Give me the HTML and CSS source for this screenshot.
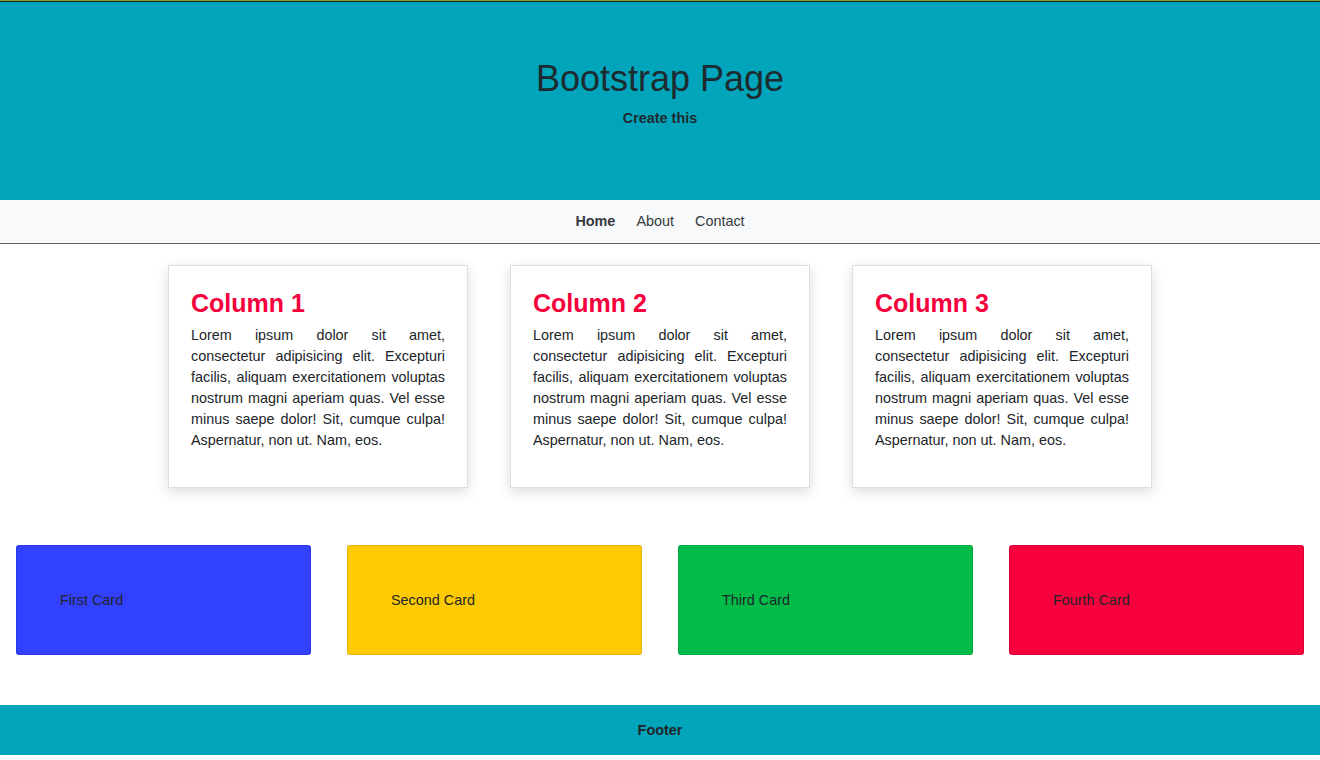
FILE: index.html
```html
<!DOCTYPE html>
<html lang="en">
<head>
<meta charset="utf-8">
<title>Bootstrap Page</title>
<link rel="stylesheet" href="styles.css">
</head>
<body>
<div class="page">
  <header class="hero">
    <h1 class="hero-title">Bootstrap Page</h1>
    <p class="hero-sub">Create this</p>
  </header>
  <nav class="nav">
    <a class="nav-link active" href="#">Home</a>
    <a class="nav-link" href="#">About</a>
    <a class="nav-link" href="#">Contact</a>
  </nav>
  <section class="columns">
    <div class="col-card">
      <h2 class="col-title">Column 1</h2>
      <p class="col-text">Lorem ipsum dolor sit amet, consectetur adipisicing elit. Excepturi facilis, aliquam exercitationem voluptas nostrum magni aperiam quas. Vel esse minus saepe dolor! Sit, cumque culpa! Aspernatur, non ut. Nam, eos.</p>
    </div>
    <div class="col-card">
      <h2 class="col-title">Column 2</h2>
      <p class="col-text">Lorem ipsum dolor sit amet, consectetur adipisicing elit. Excepturi facilis, aliquam exercitationem voluptas nostrum magni aperiam quas. Vel esse minus saepe dolor! Sit, cumque culpa! Aspernatur, non ut. Nam, eos.</p>
    </div>
    <div class="col-card">
      <h2 class="col-title">Column 3</h2>
      <p class="col-text">Lorem ipsum dolor sit amet, consectetur adipisicing elit. Excepturi facilis, aliquam exercitationem voluptas nostrum magni aperiam quas. Vel esse minus saepe dolor! Sit, cumque culpa! Aspernatur, non ut. Nam, eos.</p>
    </div>
  </section>
  <section class="tiles">
    <div class="tile tile-blue">First Card</div>
    <div class="tile tile-yellow">Second Card</div>
    <div class="tile tile-green">Third Card</div>
    <div class="tile tile-red">Fourth Card</div>
  </section>
  <footer class="footer">Footer</footer>
</div>
</body>
</html>
```
FILE: styles.css
```css
* { box-sizing: border-box; }
html, body { margin: 0; padding: 0; background: #fff; }
body {
  font-family: "Liberation Sans", Arial, sans-serif;
  font-size: 14.4px;
  line-height: 21px;
  color: #212529;
}
.page { border-top: 1px solid #889a2e; }
.hero {
  background: #00a5bb;
  border-top: 1px solid #1c2a24;
  height: 199px;
  padding-top: 55px;
  text-align: center;
}
.hero-title {
  margin: 0 0 8px;
  font-size: 36px;
  font-weight: 400;
  line-height: 1.2;
  color: #1e2a2e;
}
.hero-sub {
  margin: 0;
  font-weight: 700;
  color: #1e2a2e;
}
.nav {
  background: #f8f9fa;
  border-bottom: 1px solid #5b6166;
  height: 44px;
  display: flex;
  justify-content: center;
  align-items: center;
}
.nav-link {
  padding: 0 10.5px;
  color: #343a40;
  text-decoration: none;
}
.nav-link.active { font-weight: 700; }
.columns {
  display: flex;
  justify-content: center;
  gap: 42px;
  margin-top: 21px;
}
.col-card {
  width: 300px;
  border: 1px solid #dedede;
  background: #fff;
  padding: 21px 22px;
  box-shadow: 0 4px 12px rgba(0, 0, 0, 0.14);
}
.col-title {
  margin: 1px 0 7px;
  font-size: 25px;
  line-height: 30px;
  font-weight: 700;
  color: #f5003d;
}
.col-text {
  margin: 0 0 15px;
  text-align: justify;
}
.tiles {
  display: flex;
  gap: 36px;
  padding: 0 16px;
  margin-top: 57px;
}
.tile {
  flex: 1;
  height: 110px;
  border: 1px solid rgba(0, 0, 0, 0.1);
  border-radius: 3px;
  padding: 0 43px;
  display: flex;
  align-items: center;
}
.tile-blue { background: #3240ff; }
.tile-yellow { background: #ffcb00; }
.tile-green { background: #00bb48; }
.tile-red { background: #f6003d; }
.footer {
  margin-top: 50px;
  height: 50px;
  background: #00a5bb;
  display: flex;
  align-items: center;
  justify-content: center;
  font-weight: 700;
}
```
